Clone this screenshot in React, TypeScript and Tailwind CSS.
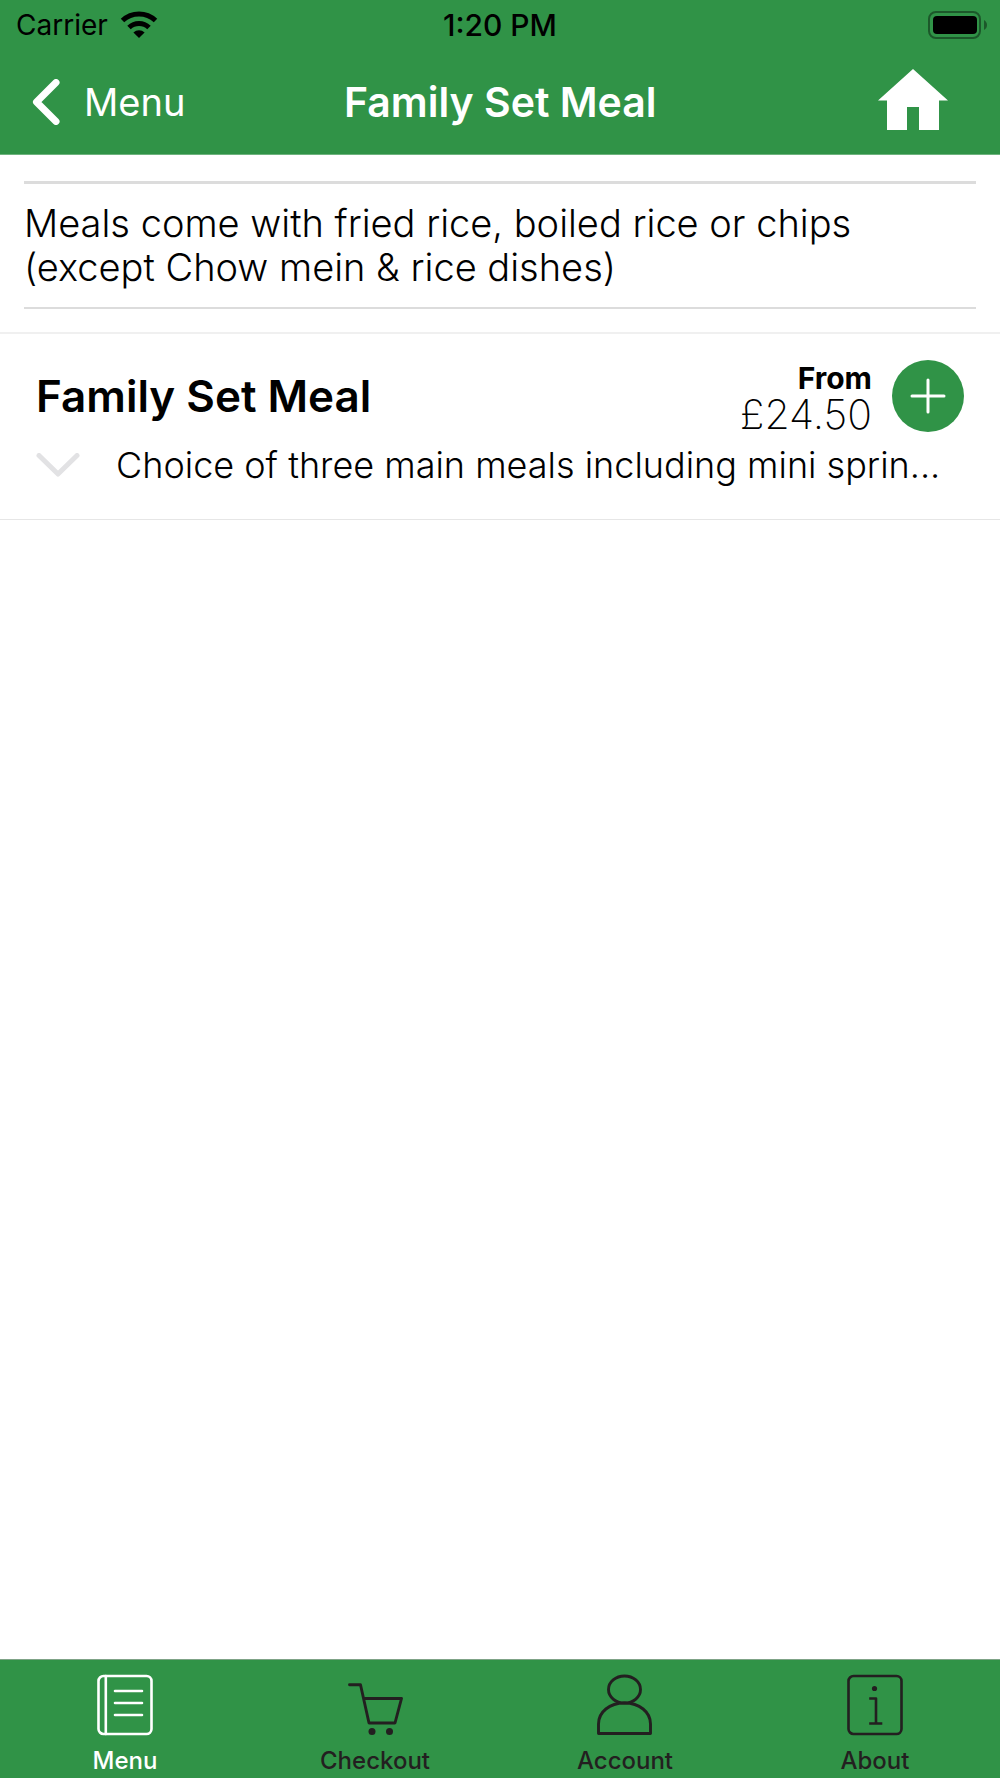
import type { ReactNode } from 'react'

// ── Types & data ──────────────────────────────────────────────────────────────

type MenuItem = {
  id: string
  name: string
  price: string
  description: string
}

type Tab = {
  label: string
  href: string
  icon: ReactNode
}

const ITEMS: MenuItem[] = [
  {
    id: 'family-set-meal',
    name: 'Family Set Meal',
    price: '£24.50',
    description: 'Choice of three main meals including mini sprin...',
  },
]

const ACTIVE_TAB = 'Menu'

// ── Icons ─────────────────────────────────────────────────────────────────────

function WifiIcon() {
  return (
    <svg viewBox="0 0 38 28" className="w-[38px] h-7" aria-hidden>
      <g fill="none" stroke="currentColor" strokeWidth="5">
        <path d="M2.5 9.5a24 24 0 0 1 33 0" />
        <path d="M9 16.5a14.5 14.5 0 0 1 20 0" />
      </g>
      <path d="M19 27l-5.6-5.6a8.2 8.2 0 0 1 11.2 0z" fill="currentColor" />
    </svg>
  )
}

function BatteryIcon() {
  return (
    <svg viewBox="0 0 60 28" className="w-[60px] h-7" aria-hidden>
      <rect x="1" y="1" width="51" height="26" rx="7" fill="none" stroke="#1c582a" strokeWidth="2" />
      <rect x="5" y="5" width="44" height="18" rx="4" fill="#000" />
      <path d="M56 9c4 2 4 8 0 10z" fill="#1c582a" />
    </svg>
  )
}

function BackIcon() {
  return (
    <svg viewBox="0 0 28 46" className="w-7 h-[46px]" aria-hidden>
      <path d="M24 3.5L4.5 23 24 42.5" fill="none" stroke="currentColor" strokeWidth="7" strokeLinecap="round" strokeLinejoin="round" />
    </svg>
  )
}

function HomeIcon() {
  return (
    <svg viewBox="0 0 70 62" className="w-[70px] h-[62px]" aria-hidden>
      <path d="M35 0l35 31.5h-9V61H41V38H29v23H9V31.5H0z" fill="currentColor" />
    </svg>
  )
}

function ChevronIcon() {
  return (
    <svg viewBox="0 0 44 24" className="w-11 h-6" aria-hidden>
      <path d="M3 2.5L22 21 41 2.5" fill="none" stroke="currentColor" strokeWidth="5" strokeLinecap="round" strokeLinejoin="round" />
    </svg>
  )
}

function PlusIcon() {
  return (
    <svg viewBox="0 0 36 36" className="w-9 h-9" aria-hidden>
      <path d="M18 2v32M2 18h32" fill="none" stroke="currentColor" strokeWidth="3" strokeLinecap="round" />
    </svg>
  )
}

function TabIcon({ children }: { children: ReactNode }) {
  return (
    <svg
      viewBox="0 0 56 62"
      className="w-14 h-[62px]"
      fill="none"
      stroke="currentColor"
      strokeWidth="2.6"
      strokeLinecap="round"
      strokeLinejoin="round"
      aria-hidden
    >
      {children}
    </svg>
  )
}

const TABS: Tab[] = [
  {
    label: 'Menu',
    href: '#menu',
    icon: (
      <TabIcon>
        <rect x="1.5" y="2" width="53" height="58" rx="5" />
        <path d="M8.8 2v58M18 17h27M18 29h27M18 41h27" />
      </TabIcon>
    ),
  },
  {
    label: 'Checkout',
    href: '#checkout',
    icon: (
      <TabIcon>
        <path d="M2.5 10.8h11L22 49h26l6.5-24.5h-38" strokeWidth="2.9" />
        <circle cx="25" cy="57.5" r="3.5" fill="currentColor" stroke="none" />
        <circle cx="42.5" cy="57.5" r="3.5" fill="currentColor" stroke="none" />
      </TabIcon>
    ),
  },
  {
    label: 'Account',
    href: '#account',
    icon: (
      <TabIcon>
        <g strokeWidth="2.9">
          <ellipse cx="27.5" cy="15.5" rx="16" ry="13.5" />
          <path d="M1.5 59.5V50C1.5 38 12.5 29 27.5 29s26 9 26 21v9.5z" />
        </g>
      </TabIcon>
    ),
  },
  {
    label: 'About',
    href: '#about',
    icon: (
      <TabIcon>
        <rect x="1.5" y="2" width="53" height="58" rx="5" />
        <circle cx="27.5" cy="14.5" r="2.6" fill="currentColor" stroke="none" />
        <path d="M23.5 24.5H29v25M23.5 49.5H34" strokeLinecap="square" />
      </TabIcon>
    ),
  },
]

// ── Header ────────────────────────────────────────────────────────────────────

function StatusBar() {
  return (
    <div className="grid grid-cols-3 items-center h-[50px] px-3 text-[28px] leading-8 text-black">
      <div className="flex items-center gap-3 pl-1">
        <span>Carrier</span>
        <WifiIcon />
      </div>
      <span className="text-center text-[30px] font-medium">1:20 PM</span>
      <div className="flex justify-end">
        <BatteryIcon />
      </div>
    </div>
  )
}

function NavBar() {
  return (
    <nav className="grid grid-cols-3 items-center h-[104px] px-8 text-white">
      <a href="#menu" className="flex items-center gap-6 text-[38px] leading-[48px]">
        <BackIcon />
        Menu
      </a>
      <h1 className="text-center whitespace-nowrap text-[41px] leading-[48px] font-semibold">Family Set Meal</h1>
      <a href="#home" aria-label="Home" className="justify-self-end mr-5 pb-1">
        <HomeIcon />
      </a>
    </nav>
  )
}

// ── Menu item row ─────────────────────────────────────────────────────────────

function ItemRow({ item }: { item: MenuItem }) {
  return (
    <li className="border-b border-[#e6e6e6] px-9 pt-6 pb-[31px]">
      <div className="flex items-center gap-5">
        <h2 className="flex-1 text-[44px] leading-[48px] font-semibold">{item.name}</h2>
        <p className="flex flex-col pt-1 text-right">
          <span className="text-[30px] leading-8 font-bold">From</span>
          <span className="text-[41px] leading-10 font-extralight">{item.price}</span>
        </p>
        <button
          type="button"
          aria-label={`Add ${item.name}`}
          className="flex items-center justify-center size-[72px] rounded-full bg-[#309347] text-white"
        >
          <PlusIcon />
        </button>
      </div>
      <div className="flex items-center gap-9 mt-2">
        <button type="button" aria-label="Show full description" className="flex-none text-[#e2e2e4]">
          <ChevronIcon />
        </button>
        <p className="flex-1 truncate text-[36px] leading-[46px] font-light">{item.description}</p>
      </div>
    </li>
  )
}

// ── Tab bar ───────────────────────────────────────────────────────────────────

function TabBar() {
  return (
    <nav className="grid grid-cols-4 border-t border-[#7fa387] bg-[#309347] pt-[14px] pb-0.5">
      {TABS.map((tab) => (
        <a
          key={tab.label}
          href={tab.href}
          className={`flex flex-col items-center gap-2.5 ${
            tab.label === ACTIVE_TAB ? 'text-white' : 'text-[#231f20]'
          }`}
        >
          {tab.icon}
          <span className="text-2xl leading-[30px] font-medium">{tab.label}</span>
        </a>
      ))}
    </nav>
  )
}

// ── Page ──────────────────────────────────────────────────────────────────────

export default function App() {
  return (
    <div className="flex flex-col min-h-screen bg-white text-black font-['Inter','Liberation_Sans',sans-serif]">
      <header className="border-b border-[#6eb37e] bg-[#309347]">
        <StatusBar />
        <NavBar />
      </header>

      <main className="flex-1">
        <p className="mx-6 mt-[26px] mb-[23px] border-t-3 border-b-2 border-[#dcdcdc] pt-[17px] pb-[18px] pr-20 text-[38px] leading-[44px] font-light">
          Meals come with fried rice, boiled rice or chips (except Chow mein &amp; rice dishes)
        </p>
        <ul className="border-t-2 border-[#f0f0f0]">
          {ITEMS.map((item) => (
            <ItemRow key={item.id} item={item} />
          ))}
        </ul>
      </main>

      <TabBar />
    </div>
  )
}
